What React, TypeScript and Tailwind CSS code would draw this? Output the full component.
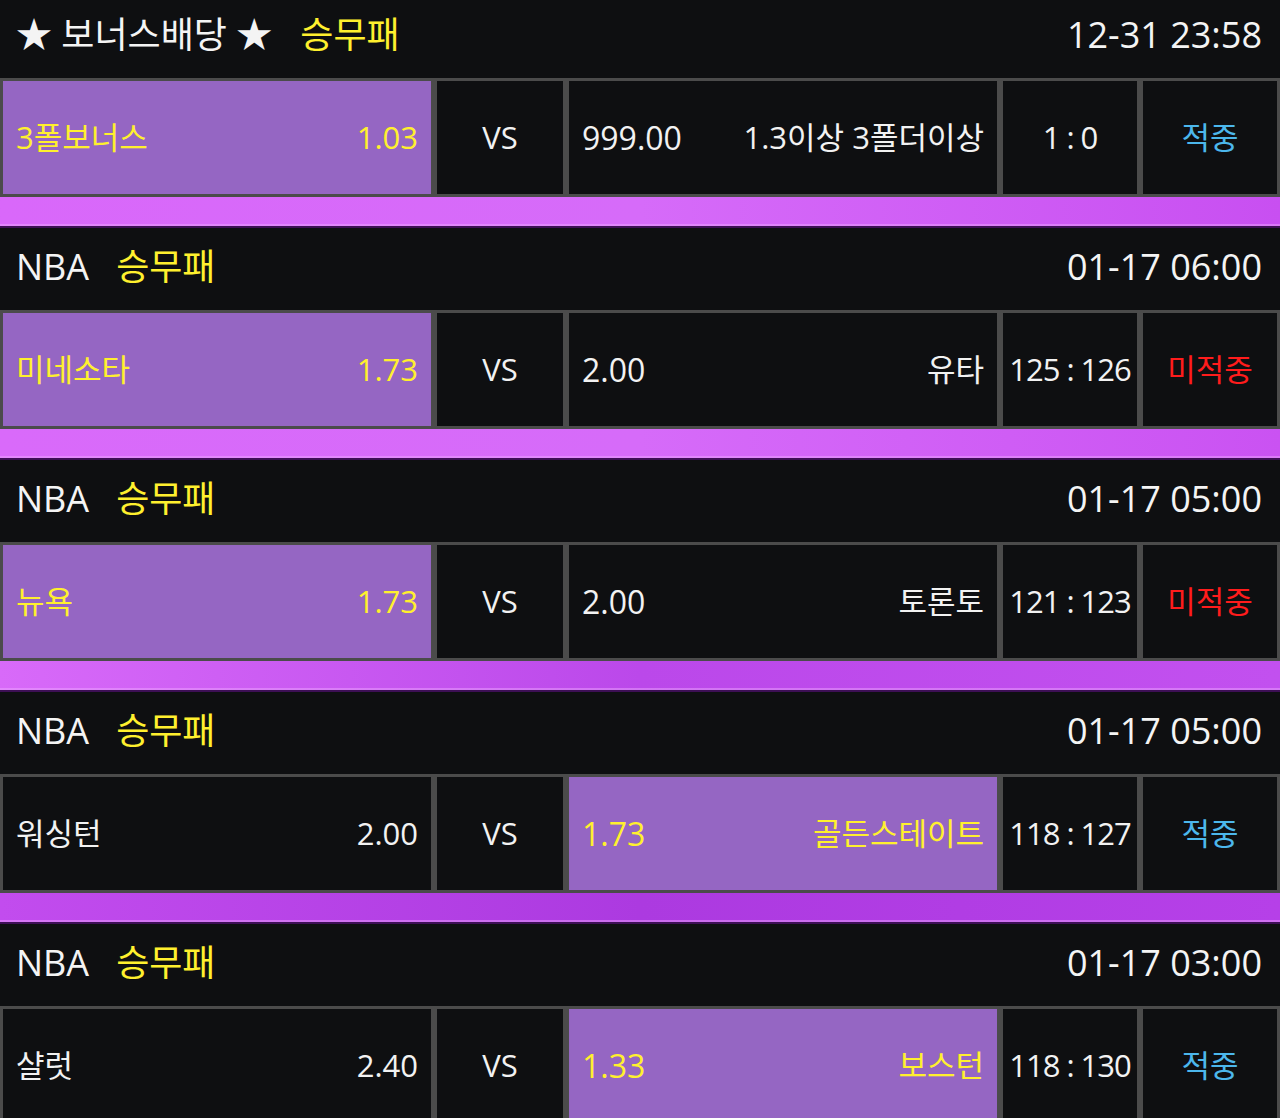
import React from "react";

type Side = { label: string; odd: string };
type Game = {
  league: string;
  date: string;
  home: Side;
  away: Side;
  pick: "home" | "away";
  score: string;
  result: "hit" | "miss";
  bar: string;
};

const games: Game[] = [
  {
    league: "★ 보너스배당 ★",
    date: "12-31 23:58",
    home: { label: "3폴보너스", odd: "1.03" },
    away: { label: "1.3이상 3폴더이상", odd: "999.00" },
    pick: "home",
    score: "1 : 0",
    result: "hit",
    bar: "bg-gradient-to-r from-[#d968fa] via-[#d66bf9] to-[#c84ff1]",
  },
  {
    league: "NBA",
    date: "01-17 06:00",
    home: { label: "미네소타", odd: "1.73" },
    away: { label: "유타", odd: "2.00" },
    pick: "home",
    score: "125 : 126",
    result: "miss",
    bar: "bg-gradient-to-r from-[#d96afa] via-[#d66bf9] to-[#ca52f2]",
  },
  {
    league: "NBA",
    date: "01-17 05:00",
    home: { label: "뉴욕", odd: "1.73" },
    away: { label: "토론토", odd: "2.00" },
    pick: "home",
    score: "121 : 123",
    result: "miss",
    bar: "bg-gradient-to-r from-[#d86af9] via-[#bb48ea] to-[#c250ef]",
  },
  {
    league: "NBA",
    date: "01-17 05:00",
    home: { label: "워싱턴", odd: "2.00" },
    away: { label: "골든스테이트", odd: "1.73" },
    pick: "away",
    score: "118 : 127",
    result: "hit",
    bar: "bg-gradient-to-r from-[#c24cee] via-[#ac3ae0] to-[#b640e8]",
  },
  {
    league: "NBA",
    date: "01-17 03:00",
    home: { label: "샬럿", odd: "2.40" },
    away: { label: "보스턴", odd: "1.33" },
    pick: "away",
    score: "118 : 130",
    result: "hit",
    bar: "",
  },
];

const font = { fontFamily: '"Open Sans", "Noto Sans CJK KR", sans-serif' };

function Cell({
  children,
  className = "",
  selected = false,
}: {
  children: React.ReactNode;
  className?: string;
  selected?: boolean;
}) {
  return (
    <div
      className={`flex h-full items-center border-[3px] border-[#4b4b4b] ${
        selected ? "bg-[#9566c3] text-[#fff02e]" : "bg-[#0e0f11] text-[#f2f2f2]"
      } ${className}`}
    >
      {children}
    </div>
  );
}

function Block({ g, first }: { g: Game; first: boolean }) {
  return (
    <div className={first ? "-mt-[4px]" : ""}>
      <div className="flex h-[82px] items-center justify-between pb-[4px] pl-[16px] pr-[18px] text-[36px]">
        <div className="flex items-center">
          <span className="text-[#f4f4f4]">{g.league}</span>
          <span className={`text-[#fff02e] ${first ? "ml-[28px]" : "ml-[27px]"}`}>승무패</span>
        </div>
        <span className="text-[#f4f4f4]">{g.date}</span>
      </div>
      <div className="flex h-[119px] text-[31px]">
        <Cell className="w-[434px] justify-between px-[13px]" selected={g.pick === "home"}>
          <span>{g.home.label}</span>
          <span>{g.home.odd}</span>
        </Cell>
        <Cell className="w-[132px] justify-center">
          <span>VS</span>
        </Cell>
        <Cell className="w-[434px] justify-between px-[13px]" selected={g.pick === "away"}>
          <span className="text-[32px]">{g.away.odd}</span>
          <span>{g.away.label}</span>
        </Cell>
        <Cell className="w-[140px] justify-center whitespace-nowrap">
          <span className="tracking-[-1px]">{g.score}</span>
        </Cell>
        <Cell className="w-[140px] justify-center">
          <span className={g.result === "hit" ? "text-[#4cb7ec]" : "text-[#ff1c1c]"}>
            {g.result === "hit" ? "적중" : "미적중"}
          </span>
        </Cell>
      </div>
      {g.bar && (
        <div
          className={`h-[31px] border-b-[2px] border-[#3d0f55] ${g.bar} shadow-[inset_0_-2px_0_rgba(240,170,255,0.45)]`}
        />
      )}
    </div>
  );
}

export default function App() {
  return (
    <div className="h-[1118px] w-[1280px] overflow-hidden bg-[#0e0f11]" style={font}>
      {games.map((g, i) => (
        <Block key={i} g={g} first={i === 0} />
      ))}
    </div>
  );
}
